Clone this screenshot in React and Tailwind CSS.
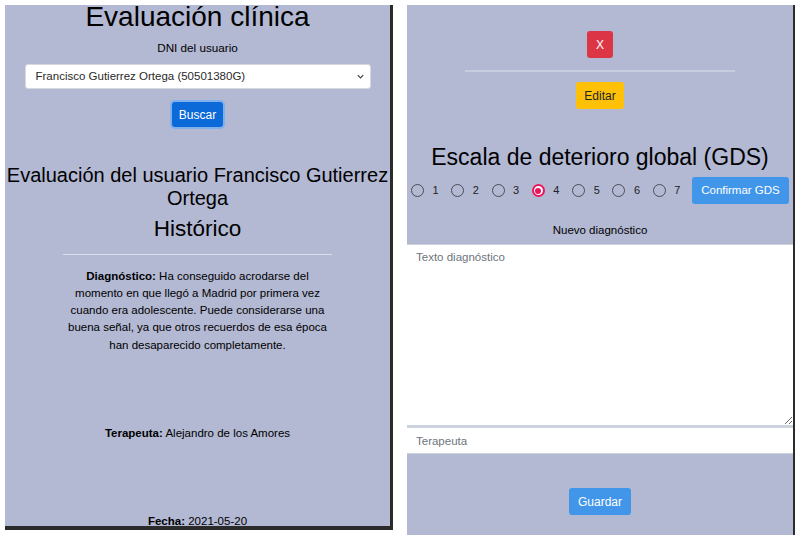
import React from "react";

const font = { fontFamily: '"Liberation Sans", Arial, sans-serif' };

function Radio({ n, checked }) {
  return (
    <div className="flex items-center">
      {checked ? (
        <span className="w-[13px] h-[13px] rounded-full border-[2px] border-[#e8175d] flex items-center justify-center bg-white">
          <span className="w-[6px] h-[6px] rounded-full bg-[#e8175d]" />
        </span>
      ) : (
        <span className="w-[13px] h-[13px] rounded-full border-[1.5px] border-[#4d4d55] bg-[#b3b8d3]" />
      )}
      <span className="ml-[8px] w-[7px] text-[11px] leading-none text-[#222]">{n}</span>
    </div>
  );
}

export default function App() {
  return (
    <div className="flex items-start bg-white h-[535px] overflow-hidden pt-[5px] pl-[5px] gap-[14px] text-black" style={font}>
      {/* Left panel */}
      <div className="w-[388px] h-[525px] shrink-0 bg-[#b3b8d3] border-r-[3px] border-b-[4px] border-[#2b2b2b] text-center overflow-hidden">
        <h1 className="text-[28px] leading-[28px] -mt-[2px]">Evaluación clínica</h1>
        <p className="mt-[8px] text-[11.7px] leading-[18px]">DNI del usuario</p>
        <div className="mt-[7px] mx-auto w-[346px] h-[25px] bg-white rounded-[3px] border border-[#d6d8e0] flex items-center justify-between pl-[10px] pr-[5px]">
          <span className="text-[11.5px] text-[#2a2a2a]">Francisco Gutierrez Ortega (50501380G)</span>
          <svg width="9" height="9" viewBox="0 0 10 10" className="text-[#444]">
            <path d="M2 3.5 L5 6.5 L8 3.5" fill="none" stroke="currentColor" strokeWidth="1.4" />
          </svg>
        </div>
        <button className="block mx-auto mt-[13px] w-[51px] h-[25px] rounded-[3px] bg-[#0b69d8] text-white text-[12px] ring-2 ring-[#7fb0ee]">
          Buscar
        </button>
        <h2 className="mt-[37px] text-[20px] leading-[23px] w-full">
          Evaluación del usuario Francisco Gutierrez Ortega
        </h2>
        <h2 className="mt-[5px] text-[22.5px] leading-[28px]">Histórico</h2>
        <div className="mt-[11px] mx-auto w-[70%] h-px bg-[#dde0ec]" />
        <p className="mt-[12.5px] text-[11.5px] leading-[17.3px]">
          <b>Diagnóstico:</b> Ha conseguido acrodarse del
          <br />
          momento en que llegó a Madrid por primera vez
          <br />
          cuando era adolescente. Puede considerarse una
          <br />
          buena señal, ya que otros recuerdos de esa época
          <br />
          han desaparecido completamente.
        </p>
        <p className="mt-[71.5px] text-[11.5px] leading-[17.5px]">
          <b>Terapeuta:</b> Alejandro de los Amores
        </p>
        <p className="mt-[70px] text-[11.5px] leading-[17.5px]">
          <b>Fecha:</b> 2021-05-20
        </p>
      </div>

      {/* Right panel */}
      <div className="w-[388px] h-[540px] shrink-0 bg-[#b3b8d3] border-r-[2px] border-[#2b2b2b] flex flex-col items-center text-center [&>*]:shrink-0">
        <button className="mt-[26px] w-[26px] h-[27px] rounded-[3px] bg-[#dc3545] text-white text-[12px]">X</button>
        <div className="mt-[12px] w-[70%] h-[2px] bg-[#c9cde0]" />
        <button className="mt-[10px] w-[48px] h-[27px] rounded-[3px] bg-[#ffc107] text-[#212529] text-[12px]">Editar</button>
        <h2 className="mt-[35px] text-[23px] leading-[27px]">Escala de deterioro global (GDS)</h2>
        <div className="mt-[6px] w-full flex items-center pl-[4px] pr-[4px]">
          <div className="flex items-center gap-[12.3px]">
            <Radio n="1" />
            <Radio n="2" />
            <Radio n="3" />
            <Radio n="4" checked />
            <Radio n="5" />
            <Radio n="6" />
            <Radio n="7" />
          </div>
          <button className="ml-auto w-[97px] h-[27px] rounded-[3px] bg-[#4196ea] text-white text-[11.5px]">Confirmar GDS</button>
        </div>
        <p className="mt-[17px] text-[11.5px] leading-[18px]">Nuevo diagnóstico</p>
        <textarea
          className="mt-[5px] w-full h-[183px] bg-white border-t border-b-[2px] border-[#ccd2de] text-[11.5px] px-[9px] pt-[4px] pb-[6px] placeholder:text-[#6c757d] outline-none"
          style={font}
          placeholder="Texto diagnóstico"
        />
        <input
          className="w-full h-[27px] bg-white border-t border-b border-[#ccd2de] text-[11.5px] px-[9px] placeholder:text-[#6c757d] outline-none"
          style={font}
          placeholder="Terapeuta"
        />
        <button className="mt-[34px] w-[62px] h-[27px] rounded-[3px] bg-[#4196ea] text-white text-[12px]">Guardar</button>
      </div>
    </div>
  );
}
